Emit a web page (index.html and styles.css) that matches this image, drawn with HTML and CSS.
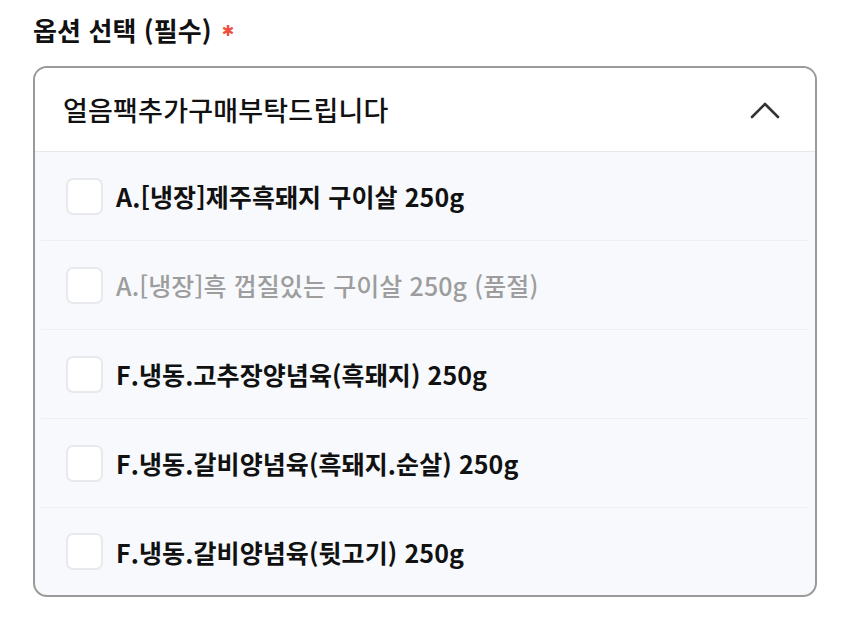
FILE: index.html
```html
<!DOCTYPE html>
<html lang="ko">
<head>
  <meta charset="UTF-8" />
  <meta name="viewport" content="width=device-width, initial-scale=1.0" />
  <title>옵션 선택</title>
  <link rel="stylesheet" href="styles.css">
</head>
<body>
  <div class="option-field">
    <h3 class="field-label">옵션 선택 (필수) <span class="req">✱</span></h3>
    <div class="dropdown">
      <div class="dropdown-head">
        <span>얼음팩추가구매부탁드립니다</span>
        <svg class="chevron" width="32" height="20" viewBox="0 0 32 20">
          <path d="M3 17 L16 4 L29 17" fill="none" stroke="#333" stroke-width="2.6" stroke-linecap="round" stroke-linejoin="round"/>
        </svg>
      </div>
      <ul class="option-list">
        <li class="option"><span class="box"></span>A.[냉장]제주흑돼지 구이살 250g</li>
        <li class="option disabled"><span class="box"></span>A.[냉장]흑 껍질있는 구이살 250g (품절)</li>
        <li class="option"><span class="box"></span>F.냉동.고추장양념육(흑돼지) 250g</li>
        <li class="option"><span class="box"></span>F.냉동.갈비양념육(흑돼지.순살) 250g</li>
        <li class="option"><span class="box"></span>F.냉동.갈비양념육(뒷고기) 250g</li>
      </ul>
    </div>
  </div>
</body>
</html>
```

FILE: styles.css
```css
* { box-sizing: border-box; }
body {
  margin: 0;
  background: #fff;
  color: #111;
  font-family: "Noto Sans CJK KR", "Noto Sans", sans-serif;
}
.option-field {
  padding: 9px 33px 0;
}
.field-label {
  display: flex;
  align-items: center;
  margin: 0 0 15px;
  font-size: 26px;
  font-weight: 700;
  line-height: 40px;
  letter-spacing: 0.1px;
}
.req {
  color: #ec4f3d;
  font-family: "DejaVu Sans", sans-serif;
  font-size: 15px;
  margin-left: 10px;
  padding-top: 2px;
}
.dropdown {
  border: 2px solid #9a9a9a;
  border-radius: 14px;
  overflow: hidden;
  background: #f7f9fc;
}
.dropdown-head {
  display: flex;
  align-items: center;
  justify-content: space-between;
  height: 84px;
  padding: 0 34px 0 28px;
  background: #fff;
  border-bottom: 1px solid #e6e8ec;
  font-size: 27px;
  font-weight: 500;
  letter-spacing: 0.2px;
}
.option-list {
  list-style: none;
  margin: 0;
  padding: 0 6px;
}
.option {
  display: flex;
  align-items: center;
  gap: 13px;
  height: 89px;
  padding-left: 25px;
  border-bottom: 1px solid #edeff3;
  font-size: 25px;
  font-weight: 700;
  letter-spacing: 0.1px;
}
.option:last-child { border-bottom: none; height: 87px; }
.option.disabled { color: #9d9d9d; font-weight: 500; }
.box {
  width: 37px;
  height: 37px;
  border: 2px solid #e7e9ed;
  border-radius: 7px;
  background: #fff;
  flex-shrink: 0;
}
```
